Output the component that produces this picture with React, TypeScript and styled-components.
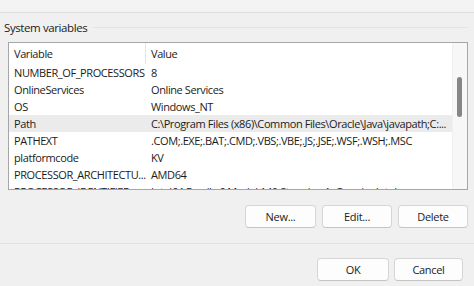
import React from "react";
import styled, { createGlobalStyle } from "styled-components";

const GlobalStyle = createGlobalStyle`
  html, body {
    margin: 0;
    padding: 0;
    background: #f0f0f0;
  }
  * {
    box-sizing: border-box;
  }
`;

const Window = styled.div`
  width: 474px;
  height: 286px;
  overflow: hidden;
  background: #f0f0f0;
  font-family: "Open Sans", "Noto Sans", sans-serif;
  font-size: 11px;
  letter-spacing: -0.4px;
  color: #1b1b1b;
  display: flex;
  flex-direction: column;
`;

const TopStrip = styled.div`
  height: 13px;
  background: #f3f3f3;
  border-bottom: 1px solid #dedede;
`;

const GroupHeader = styled.div`
  height: 29px;
  display: flex;
  align-items: center;
  gap: 6px;
  padding: 0 6px 0 4px;
`;

const GroupTitle = styled.span`
  font-size: 11.5px;
`;

const GroupRule = styled.div`
  flex: 1;
  height: 1px;
  background: #e4e4e4;
`;

const ListBox = styled.div`
  margin: 0 6px 0 8px;
  height: 148px;
  border: 1px solid #a6a6a6;
  background: #fff;
  display: flex;
  overflow: hidden;
`;

const ListBody = styled.div`
  flex: 1;
  min-width: 0;
  display: flex;
  flex-direction: column;
`;

const Row = styled.div<{ $header?: boolean; $selected?: boolean }>`
  flex: none;
  height: ${(p) => (p.$header ? "21px" : "17px")};
  display: grid;
  grid-template-columns: 137px 1fr;
  align-items: center;
  background: ${(p) => (p.$selected ? "#ebebeb" : "transparent")};
`;

const Cell = styled.div<{ $divider?: boolean }>`
  height: 100%;
  display: flex;
  align-items: center;
  padding-left: 5px;
  white-space: nowrap;
  overflow: hidden;
  border-right: ${(p) => (p.$divider ? "1px solid #e5e5e5" : "none")};
`;

const ScrollTrack = styled.div`
  width: 15px;
  flex: none;
  background: #f7f7f7;
  border-left: 1px solid #f0f0f0;
  position: relative;
`;

const ScrollThumb = styled.div`
  position: absolute;
  left: 4px;
  top: 34px;
  width: 5px;
  height: 40px;
  border-radius: 3px;
  background: #858585;
`;

const ButtonRow = styled.div<{ $right: number; $top: number; $gap: number }>`
  display: flex;
  justify-content: flex-end;
  gap: ${(p) => p.$gap}px;
  padding-right: ${(p) => p.$right}px;
  padding-top: ${(p) => p.$top}px;
`;

const Button = styled.button<{ $w: number }>`
  width: ${(p) => p.$w}px;
  height: 23px;
  font-family: inherit;
  font-size: 11px;
  letter-spacing: -0.3px;
  color: #1b1b1b;
  background: #fdfdfd;
  border: 1px solid #d6d6d6;
  border-bottom-color: #c4c4c4;
  border-radius: 4px;
  padding: 0;
`;

const Separator = styled.div`
  margin-top: 15px;
  height: 1px;
  background: #e0e0e0;
`;

const rows: [string, string][] = [
  ["NUMBER_OF_PROCESSORS", "8"],
  ["OnlineServices", "Online Services"],
  ["OS", "Windows_NT"],
  ["Path", "C:\\Program Files (x86)\\Common Files\\Oracle\\Java\\javapath;C:..."],
  ["PATHEXT", ".COM;.EXE;.BAT;.CMD;.VBS;.VBE;.JS;.JSE;.WSF;.WSH;.MSC"],
  ["platformcode", "KV"],
  ["PROCESSOR_ARCHITECTU...", "AMD64"],
  ["PROCESSOR_IDENTIFIER", "Intel64 Family 6 Model 140 Stepping 1, GenuineIntel"],
];

const App = () => {
  return (
    <Window>
      <GlobalStyle />
      <TopStrip />
      <GroupHeader>
        <GroupTitle>System variables</GroupTitle>
        <GroupRule />
      </GroupHeader>
      <ListBox>
        <ListBody>
          <Row $header>
            <Cell $divider>Variable</Cell>
            <Cell>Value</Cell>
          </Row>
          {rows.map(([name, value]) => (
            <Row key={name} $selected={name === "Path"}>
              <Cell>{name}</Cell>
              <Cell>{value}</Cell>
            </Row>
          ))}
        </ListBody>
        <ScrollTrack>
          <ScrollThumb />
        </ScrollTrack>
      </ListBox>
      <ButtonRow $right={6} $top={15} $gap={6}>
        <Button $w={71}>New...</Button>
        <Button $w={70}>Edit...</Button>
        <Button $w={70}>Delete</Button>
      </ButtonRow>
      <Separator />
      <ButtonRow $right={11} $top={14} $gap={5}>
        <Button $w={72}>OK</Button>
        <Button $w={69}>Cancel</Button>
      </ButtonRow>
    </Window>
  );
};

export default App;
